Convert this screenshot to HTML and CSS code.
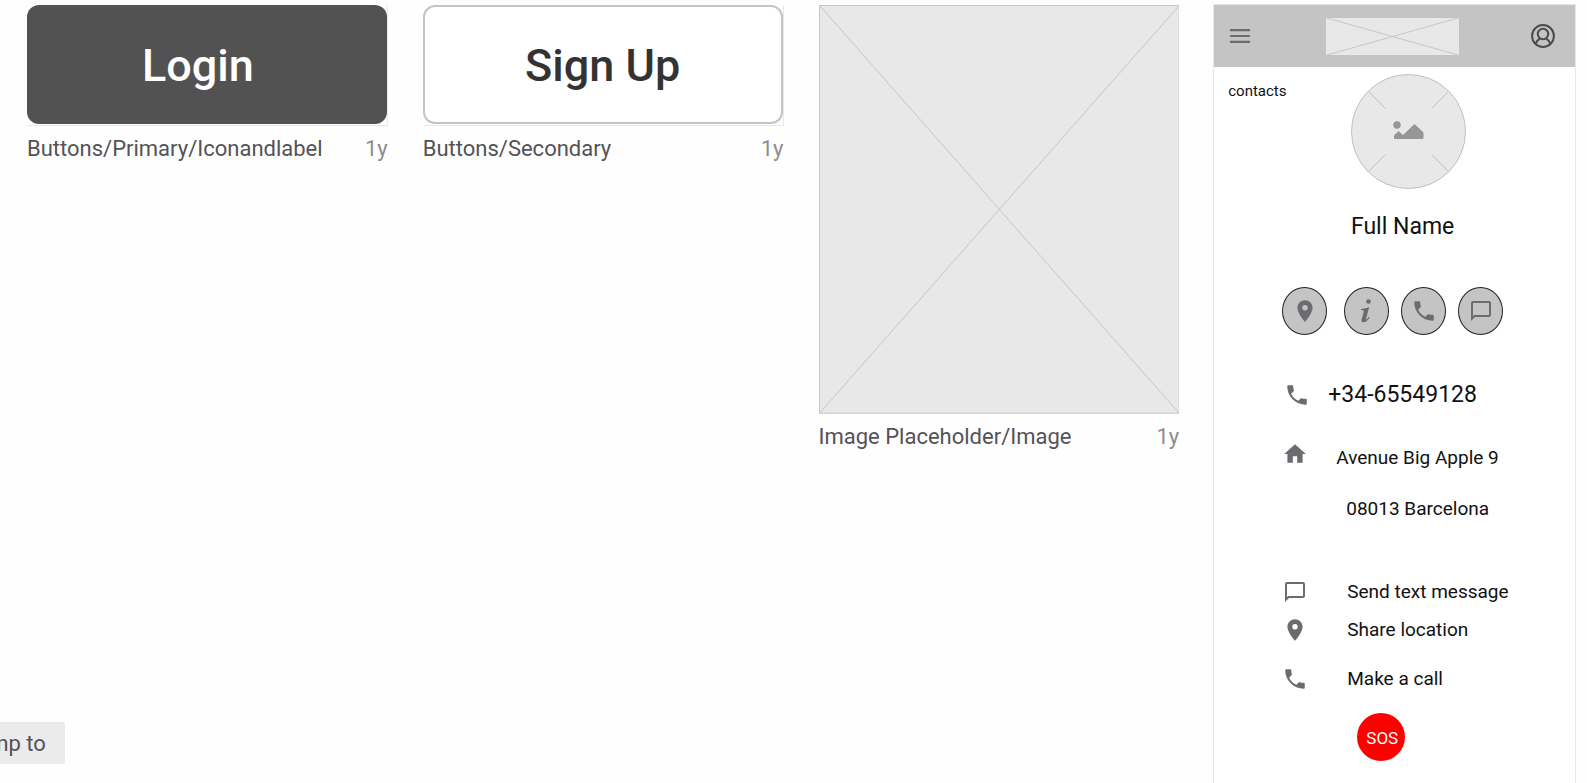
FILE: index.html
```html
<!DOCTYPE html>
<html lang="en">
<head>
<meta charset="utf-8">
<meta name="viewport" content="width=device-width, initial-scale=1">
<title>Component library</title>
<link rel="stylesheet" href="styles.css">
</head>
<body>
<svg class="sprite" aria-hidden="true">
  <symbol id="phone" viewBox="0 0 24 24"><path d="M6.62 10.79c1.44 2.83 3.76 5.14 6.59 6.59l2.2-2.2c.27-.27.67-.36 1.02-.24 1.12.37 2.33.57 3.57.57.55 0 1 .45 1 1V20c0 .55-.45 1-1 1C10.61 21 3 13.39 3 4c0-.55.45-1 1-1h3.500c.55 0 1 .45 1 1 0 1.250.2 2.450.57 3.570.11.350.03.740-.25 1.020z"/></symbol>
  <symbol id="pin" viewBox="0 0 24 24"><path d="M12 2C8.130 2 5 5.130 5 9c0 5.250 7 13 7 13s7-7.750 7-13c0-3.870-3.130-7-7-7zm0 9.500a2.500 2.500 0 0 1 0-5 2.500 2.500 0 0 1 0 5z"/></symbol>
  <symbol id="chat" viewBox="0 0 24 24"><path d="M20 2H4c-1.100 0-2 .9-2 2v18l4-4h14c1.100 0 2-.9 2-2V4c0-1.100-.9-2-2-2zm0 14H5.200L4 17.200V4h16z"/></symbol>
  <symbol id="home" viewBox="0 0 24 24"><path d="M10 20v-6h4v6h5v-8h3L12 3 2 12h3v8z"/></symbol>
</svg>

<main class="board">
  <article class="card">
    <div class="frame"><button class="btn btn-primary" type="button">Login</button></div>
    <div class="caption"><span>Buttons/Primary/Iconandlabel</span><time>1y</time></div>
  </article>

  <article class="card">
    <div class="frame"><button class="btn btn-secondary" type="button">Sign Up</button></div>
    <div class="caption"><span>Buttons/Secondary</span><time>1y</time></div>
  </article>

  <article class="card">
    <svg class="placeholder" viewBox="0 0 361 409" preserveAspectRatio="none" role="img" aria-label="Image placeholder">
      <rect x=".5" y=".5" width="360" height="408"/>
      <path d="M1 1l359 407M360 1L1 408"/>
    </svg>
    <div class="caption"><span>Image Placeholder/Image</span><time>1y</time></div>
  </article>

  <article class="screen">
    <header class="topbar">
      <button class="icon-btn" type="button" aria-label="Menu">
        <svg class="menu-icon" viewBox="0 0 20 14"><path d="M0 1.200h20M0 7h20M0 12.800h20"/></svg>
      </button>
      <svg class="logo" viewBox="0 0 133 37" role="img" aria-label="Logo placeholder">
        <rect width="133" height="37"/>
        <path d="M1 0l131 37M132 0L1 37"/>
      </svg>
      <button class="icon-btn icon-btn-end" type="button" aria-label="Account">
        <svg class="user-icon" viewBox="0 0 24 24"><circle cx="12" cy="12" r="10.900"/><circle cx="12" cy="10" r="5.200"/><path d="M4.500 19.600c1-2.400 2.500-3.900 4.600-5.300M19.500 19.600c-1-2.400-2.500-3.900-4.600-5.300"/></svg>
      </button>
    </header>

    <div class="profile">
      <a class="back" href="#contacts">contacts</a>
      <svg class="avatar" viewBox="0 0 115 115" role="img" aria-label="Profile picture">
        <circle cx="57.500" cy="57.500" r="57"/>
        <path class="ticks" d="M17.500 17.500l17 17M97.500 17.500l-17 17M17.500 97.500l17-17M97.500 97.500l-17-17"/>
        <circle class="glyph" cx="46" cy="51" r="3.700"/>
        <path class="glyph" d="M44 65q-1 0-1-1v-2.500l4.500-4.500 4.500 4 11.500-11 9 8.500V64q0 1-1 1z"/>
      </svg>
    </div>
    <h1 class="name">Full Name</h1>

    <div class="actions">
      <button class="round" type="button" aria-label="Location"><svg class="icon"><use href="#pin"/></svg></button>
      <button class="round round-info" type="button" aria-label="Information"><svg class="icon" viewBox="0 0 26 26"><circle cx="14.500" cy="3.500" r="2.300"/><path d="M7 11c3-.3 5.600-1.200 8.200-2.100l-3.100 11.800c-.4 1.500.9.700 2.700-1.700l.9.600c-1.900 3.200-4 4.700-6.300 4.700-1.800 0-2.300-1.200-1.700-3.200l2-7.200c.3-1.200 0-1.700-2.700-1.900z"/></svg></button>
      <button class="round" type="button" aria-label="Call"><svg class="icon"><use href="#phone"/></svg></button>
      <button class="round" type="button" aria-label="Message"><svg class="icon icon-chat"><use href="#chat"/></svg></button>
    </div>

    <div class="number"><svg class="icon"><use href="#phone"/></svg><span>+34-65549128</span></div>

    <div class="address">
      <svg class="icon"><use href="#home"/></svg>
      <address><span>Avenue Big Apple 9</span><span class="city">08013 Barcelona</span></address>
    </div>

    <nav class="links">
      <a class="link" href="#message"><svg class="icon icon-chat"><use href="#chat"/></svg><span>Send text message</span></a>
      <a class="link" href="#location"><svg class="icon"><use href="#pin"/></svg><span>Share location</span></a>
      <a class="link link-call" href="#call"><svg class="icon"><use href="#phone"/></svg><span>Make a call</span></a>
    </nav>

    <button class="sos" type="button">SOS</button>
  </article>
</main>

<button class="jump" type="button">Jump to</button>
</body>
</html>
```
FILE: styles.css
```css
* { box-sizing: border-box; }

body {
  margin: 0;
  background: #fefefe;
  color: #111;
  font-family: Roboto, "Liberation Sans", sans-serif;
  height: 100vh;
  overflow: hidden;
}

button { font-family: inherit; cursor: pointer; }
a { color: inherit; text-decoration: none; }
svg { display: block; flex: none; }
.sprite { position: absolute; width: 0; height: 0; }

.board {
  display: grid;
  grid-template-columns: repeat(4, minmax(0, 1fr));
  gap: 35px;
  padding: 5px 12px 0 27px;
  min-height: 100vh;
}

.frame {
  border: solid #e8e8e8;
  border-width: 0 1px 1px 0;
  padding-bottom: 1px;
}

.btn {
  display: block;
  width: 100%;
  height: 119px;
  border-radius: 12px;
  padding: 0;
  font-size: 45px;
  font-weight: 500;
}
.btn-primary { background: #525252; color: #fff; border: 0; padding: 2px 18px 0 0; }
.btn-secondary { background: #fff; color: #333; border: 2px solid #c4c4c4; padding-top: 2px; }

.caption {
  display: flex;
  justify-content: space-between;
  margin-top: 8px;
  font-size: 22px;
  line-height: 30px;
  color: #555257;
}
.caption time { color: #8e8c90; }

.placeholder { width: 100%; height: auto; }
.placeholder rect, .logo rect { fill: #e8e8e8; }
.placeholder rect, .placeholder path, .logo path { stroke: #c6c6c6; }
.placeholder path, .logo path { fill: none; }

.screen {
  background: #fff;
  box-shadow: 0 0 0 1px #e6e6e6;
}

.topbar {
  display: grid;
  grid-template-columns: 1fr auto 1fr;
  align-items: center;
  height: 62px;
  padding: 0 20px 0 16px;
  background: #c4c4c4;
}
.icon-btn { justify-self: start; border: 0; background: none; padding: 0; }
.icon-btn-end { justify-self: end; }
.menu-icon { width: 20px; height: 14px; stroke: #6b6c70; stroke-width: 2.200; }
.logo { width: 133px; height: 37px; }
.user-icon { width: 24px; height: 24px; fill: none; stroke: #4c4c4e; stroke-width: 2; }

.profile { display: flex; gap: 64px; padding: 7px 14px 0; }
.back { font-size: 15px; line-height: 20px; margin-top: 7px; }
.avatar { width: 115px; height: 115px; fill: #e8e8e8; stroke: #c0c0c0; }
.avatar .glyph { fill: #969696; stroke: none; }

.name {
  margin: 24px 0 0;
  padding-left: 16px;
  text-align: center;
  font-size: 23px;
  font-weight: 400;
  line-height: 28px;
}

.actions { display: flex; gap: 12px; margin: 46px 0 0 68px; }
.round {
  display: flex;
  align-items: center;
  justify-content: center;
  width: 45px;
  height: 48px;
  padding: 0;
  border: 1px solid #222;
  border-radius: 50%;
  background: #c4c4c4;
}
.round-info { margin-left: 5px; }
.icon { width: 26px; height: 26px; fill: #6b6c70; }
.icon-chat { width: 24px; height: 24px; margin: 1px; }

.number {
  display: flex;
  align-items: center;
  gap: 18px;
  margin: 46px 0 0 70px;
  font-size: 23px;
  line-height: 28px;
}

.address {
  display: flex;
  gap: 28px;
  margin: 32px 0 0 68px;
  font-size: 19px;
  line-height: 24px;
}
.address address { display: grid; gap: 27px; padding-top: 5px; font-style: normal; }
.city { padding-left: 10px; }

.links { display: grid; gap: 12px; margin: 58px 0 0 68px; font-size: 19px; line-height: 24px; }
.link { display: flex; align-items: center; gap: 39px; }
.link-call { margin-top: 11px; }

.sos {
  display: block;
  width: 48px;
  height: 48px;
  margin: 21px 0 0 143px;
  padding: 2px 0 0 2px;
  border: 0;
  border-radius: 50%;
  background: #f00;
  color: #fff;
  font-size: 17px;
}

.jump {
  position: absolute;
  left: -54px;
  bottom: 19px;
  height: 42px;
  padding: 0 19px;
  border: 0;
  border-radius: 2px;
  background: #ebebeb;
  color: #555257;
  font-size: 22px;
}
```
